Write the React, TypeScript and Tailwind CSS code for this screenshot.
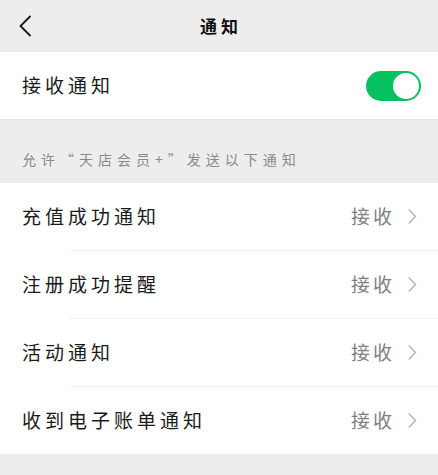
const items = ['充值成功通知', '注册成功提醒', '活动通知', '收到电子账单通知']

const font = { fontFamily: '"Noto Sans CJK SC", "Noto Sans", sans-serif' }

const App = () => {
  return (
    <div className="w-[438px] h-[475px] bg-[#ededed] overflow-hidden" style={font}>
      {/* Header */}
      <div className="h-[52px] grid grid-cols-[1fr_auto_1fr] items-center">
        <div className="pl-[18px] flex items-center">
          <svg width="14" height="22" viewBox="0 0 14 22" fill="none">
            <path d="M12 1.5L2.5 11L12 20.5" stroke="#1a1a1a" strokeWidth="1.8" strokeLinecap="round" strokeLinejoin="round" />
          </svg>
        </div>
        <div className="text-[17px] font-bold text-[#111] tracking-[4px] pl-[4px]">通知</div>
        <div />
      </div>

      {/* Master switch */}
      <div className="h-[68px] bg-white flex items-center border-b border-[#e2e2e2] pl-[22px] pr-[17px]">
        <span className="text-[19px] text-[#1a1a1a] tracking-[4px]">接收通知</span>
        <div className="ml-auto w-[55px] h-[30px] rounded-full bg-[#07c160] p-[2px] flex justify-end">
          <div className="w-[26px] h-[26px] rounded-full bg-white" />
        </div>
      </div>

      {/* Section caption */}
      <div className="h-[63px] flex items-end pb-[13px] px-[22px]">
        <span className="text-[14px] text-[#8a8a8a] tracking-[5px]">允许“天店会员+”发送以下通知</span>
      </div>

      {/* List */}
      <div className="bg-white">
        {items.map((label, i) => (
          <div key={label}>
            {i > 0 && <div className="ml-[69px] h-px bg-[#f2f2f2]" />}
            <div className="h-[67px] flex items-center pl-[22px] pr-[21px]">
              <span className="text-[19px] text-[#1a1a1a] tracking-[4px]">{label}</span>
              <span className="ml-auto text-[19px] text-[#808080] tracking-[3px]">接收</span>
              <svg className="ml-[13px]" width="9" height="15" viewBox="0 0 9 15" fill="none">
                <path d="M1.2 1L7.5 7.5L1.2 14" stroke="#b5b5b5" strokeWidth="1.5" strokeLinecap="round" strokeLinejoin="round" />
              </svg>
            </div>
          </div>
        ))}
      </div>
    </div>
  )
}

export default App
